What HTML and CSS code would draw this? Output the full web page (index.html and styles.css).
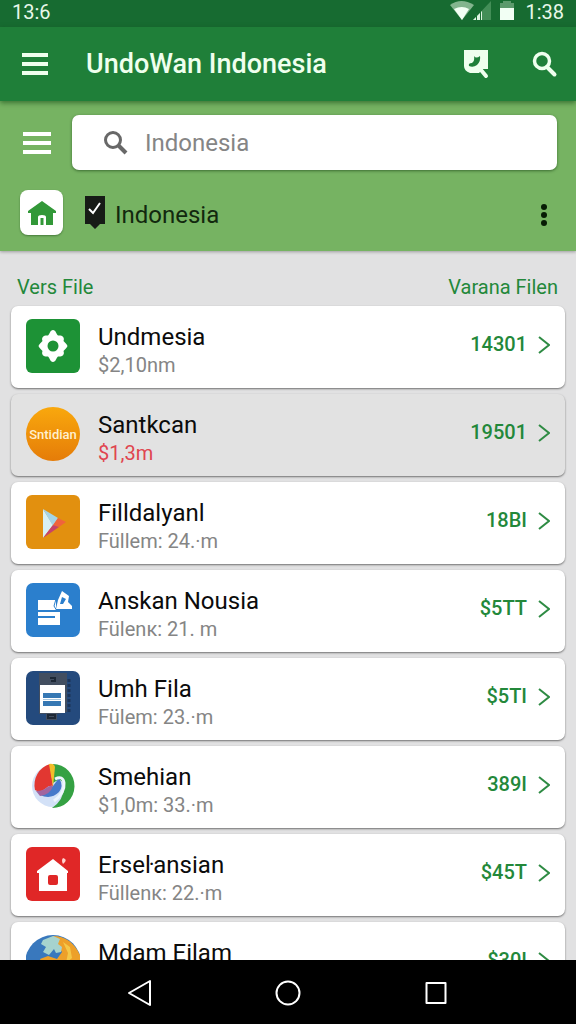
FILE: index.html
```html
<!DOCTYPE html>
<html lang="id">
<head>
<meta charset="utf-8">
<meta name="viewport" content="width=device-width, initial-scale=1">
<title>UndoWan Indonesia</title>
<link rel="stylesheet" href="styles.css">
</head>
<body>
<div class="screen">
  <div class="status">
    <span>13:6</span>
    <div class="status-right">
      <svg class="status-icons" width="66" height="22" viewBox="0 0 66 22" aria-hidden="true">
        <path d="M0 5Q11-3 24 5L12 20Z" fill="#83b58e"/>
        <path d="M4 9Q12 5 19 9L12 20Z" fill="#f2fff4"/>
        <path d="M23 20L41 1V20Z" fill="#438e57"/>
        <path d="M23 20L32 11V20Z" fill="#dff5e3"/>
        <path d="M26.500 14V20M30.500 10V20" stroke="#1a6f33" stroke-width="1"/>
        <path d="M50 3h3V1h8v2h3v6H50Z" fill="#5c9a6c"/>
        <path d="M50 8h14v12H50Z" fill="#f2fff4"/>
      </svg>
      <span>1:38</span>
    </div>
  </div>

  <header class="appbar">
    <button class="icon-btn" type="button" aria-label="Menu">
      <svg width="28" height="24" viewBox="0 0 28 24"><path d="M1 3H27M1 12H27M1 21H27" stroke="#efffee" stroke-width="4"/></svg>
    </button>
    <h1 class="title">UndoWan Indonesia</h1>
    <button class="icon-btn note-btn" type="button" aria-label="Catatan">
      <svg width="26" height="30" viewBox="0 0 26 30">
        <path d="M1 1H25V20H20L16 24H7Q1 22 1 17Z" fill="#efffee"/>
        <path d="M18 21L23 27" stroke="#efffee" stroke-width="4" stroke-linecap="round"/>
        <path d="M11 7Q13 10 17 7Q18 12 14 16Q10 19 6 17Q5 14 9 14Q12 12 11 7Z" fill="#1f7f39"/>
      </svg>
    </button>
    <button class="icon-btn" type="button" aria-label="Cari">
      <svg width="26" height="28" viewBox="0 0 26 28"><circle cx="10" cy="11" r="7.500" fill="none" stroke="#efffee" stroke-width="3.500"/><path d="M15 17L22.500 24.500" stroke="#efffee" stroke-width="4" stroke-linecap="round"/></svg>
    </button>
  </header>

  <section class="panel">
    <div class="search-row">
      <button class="icon-btn" type="button" aria-label="Navigasi">
        <svg width="30" height="26" viewBox="0 0 30 26"><path d="M1 4H29M1 13H29M1 22H29" stroke="#fff" stroke-width="4"/></svg>
      </button>
      <label class="search">
        <svg width="24" height="26" viewBox="0 0 24 26" aria-hidden="true"><circle cx="9" cy="10" r="7.500" fill="none" stroke="#686868" stroke-width="3"/><path d="M14 15L22 23" stroke="#686868" stroke-width="4"/></svg>
        <input class="search-input" type="text" placeholder="Indonesia" aria-label="Cari">
      </label>
    </div>
    <div class="place-row">
      <button class="home" type="button" aria-label="Beranda">
        <svg width="30" height="28" viewBox="0 0 30 28"><path d="M15 2L29 12V14H26V26H19V18Q19 16 15 16Q11 16 11 18V26H4V14H1V12Z" fill="#329838"/><path d="M13.500 19V26H16.500V19Z" fill="#329838"/></svg>
      </button>
      <svg class="tag" width="22" height="36" viewBox="0 0 22 36" aria-hidden="true"><path d="M1 1H21V29L16 29L11 34L6 29H1Z" fill="#171b16"/><path d="M5 14L9 18L16 8" fill="none" stroke="#fff" stroke-width="2"/></svg>
      <span class="place">Indonesia</span>
      <button class="icon-btn more" type="button" aria-label="Opsi lain">
        <svg width="8" height="24" viewBox="0 0 8 24"><g fill="#071c05"><circle cx="4" cy="4" r="3"/><circle cx="4" cy="12" r="3"/><circle cx="4" cy="20" r="3"/></g></svg>
      </button>
    </div>
  </section>

  <main class="content">
    <div class="heads"><h2>Vers File</h2><h2>Varana Filen</h2></div>
    <ul class="list">
      <li><a class="card" href="#">
        <svg class="pic" viewBox="0 0 54 54" aria-hidden="true"><rect width="54" height="54" rx="6" fill="#1d9236"/><path d="M27 11C30 11 30 15 32 16.500C36 16 39 18 37.500 22C39 24 41 25 41.500 27C41 29 39 30 37.500 32C39 36 36 38 32 37.500C30 39 30 43 27 43C24 43 24 39 22 37.500C18 38 15 36 16.500 32C15 30 13 29 12.500 27C13 25 15 24 16.500 22C15 18 18 16 22 16.500C24 15 24 11 27 11Z" fill="#fff"/><circle cx="27" cy="27" r="5.500" fill="#1d9236"/></svg>
        <span class="text"><span class="name">Undmesia</span><span class="sub">$2,10nm</span></span>
        <span class="value">14301</span>
        <svg class="chev" viewBox="0 0 12 20" aria-hidden="true"><path d="M1 2L11 10L1 18"/></svg>
      </a></li>
      <li><a class="card card-active" href="#">
        <span class="pic disc">Sntidian</span>
        <span class="text"><span class="name">Santkcan</span><span class="sub sub-red">$1,3m</span></span>
        <span class="value">19501</span>
        <svg class="chev" viewBox="0 0 12 20" aria-hidden="true"><path d="M1 2L11 10L1 18"/></svg>
      </a></li>
      <li><a class="card" href="#">
        <svg class="pic" viewBox="0 0 54 54" aria-hidden="true"><rect width="54" height="54" rx="6" fill="#e2900f"/><path d="M17 14V43L27 30Z" fill="#d8f0f4"/><path d="M17 14L32 23L27 31Z" fill="#a5d4e6"/><path d="M32 23L40 27L33 32L27 30Z" fill="#f0643c"/><path d="M17 43L27 30L33 32Z" fill="#c6426b"/></svg>
        <span class="text"><span class="name">Filldalyanl</span><span class="sub">Füllem: 24.·m</span></span>
        <span class="value">18BI</span>
        <svg class="chev" viewBox="0 0 12 20" aria-hidden="true"><path d="M1 2L11 10L1 18"/></svg>
      </a></li>
      <li><a class="card" href="#">
        <svg class="pic" viewBox="0 0 54 54" aria-hidden="true"><rect width="54" height="54" rx="7" fill="#2b7fcd"/><path d="M12 17H30V27H12ZM12 29H34V42H12Z" fill="#fff"/><path d="M12 34H29" stroke="#2b7fcd" stroke-width="2"/><path d="M36 8L43 13L42 19L46 23V26H30L32 17Z" fill="#fff"/><path d="M36 14L40 16L37 21H34Z" fill="#2b7fcd"/><path d="M30 16L28 23L31 28" fill="none" stroke="#2b7fcd" stroke-width="1"/></svg>
        <span class="text"><span class="name">Anskan Nousia</span><span class="sub">Fülenк: 21. m</span></span>
        <span class="value">$5TT</span>
        <svg class="chev" viewBox="0 0 12 20" aria-hidden="true"><path d="M1 2L11 10L1 18"/></svg>
      </a></li>
      <li><a class="card" href="#">
        <svg class="pic" viewBox="0 0 54 54" aria-hidden="true"><rect width="54" height="54" rx="7" fill="#244a7d"/><path d="M13 2H41V41L31 43V49H20V43H13Z" fill="#424e60"/><path d="M24 7H29V10H25M22 44H29V47H22Z" fill="none" stroke="#1d2836" stroke-width="2"/><path d="M43 8V41" stroke="#1c3458" stroke-width="3" stroke-dasharray="3 2"/><path d="M14 14H39V42H14Z" fill="#fff"/><path d="M17 22H35V27H17ZM17 30H35V35H17Z" fill="#3678b4"/><path d="M17 28.500H35" stroke="#a9c8df"/></svg>
        <span class="text"><span class="name">Umh Fila</span><span class="sub">Fülem: 23.·m</span></span>
        <span class="value">$5TI</span>
        <svg class="chev" viewBox="0 0 12 20" aria-hidden="true"><path d="M1 2L11 10L1 18"/></svg>
      </a></li>
      <li><a class="card" href="#">
        <svg class="pic" viewBox="0 0 54 54" aria-hidden="true"><circle cx="27" cy="27" r="21" fill="#d3e1f7"/><path d="M27 5A22 22 0 0 1 26 49Q38 41 38 27Q36 17 27 24Z" fill="#35a143"/><path d="M27 27L24 5A22 22 0 0 0 9 31Q14 34 19 30Q23 26 27 27Z" fill="#e23731"/><path d="M23 5Q28 4 29 8L27 28Z" fill="#f2bd29"/><path d="M27 27L33 19Q38 27 33 33Q25 41 14 36Q21 34 27 27Z" fill="#4779ca"/><path d="M10 32Q17 32 20 29Q24 26 27 27Q24 36 14 37Z" fill="#a2659f"/><path d="M29 20Q37 16 38 24Q39 34 28 42" fill="none" stroke="#eef5fd" stroke-width="3"/></svg>
        <span class="text"><span class="name">Smehian</span><span class="sub">$1,0m: 33.·m</span></span>
        <span class="value">389I</span>
        <svg class="chev" viewBox="0 0 12 20" aria-hidden="true"><path d="M1 2L11 10L1 18"/></svg>
      </a></li>
      <li><a class="card" href="#">
        <svg class="pic" viewBox="0 0 54 54" aria-hidden="true"><rect width="54" height="54" rx="6" fill="#e02727"/><path d="M27 12L42 24V26H41V44H13V26H11V24Z" fill="#fff"/><rect x="22" y="28" width="10" height="10" rx="2" fill="#e02727"/><path d="M37 11Q41 12 39 15L37 17Q35 13 37 11Z" fill="#ffd3cf"/></svg>
        <span class="text"><span class="name">Erseŀansian</span><span class="sub">Füllenк: 22.·m</span></span>
        <span class="value">$45T</span>
        <svg class="chev" viewBox="0 0 12 20" aria-hidden="true"><path d="M1 2L11 10L1 18"/></svg>
      </a></li>
      <li><a class="card" href="#">
        <svg class="pic" viewBox="0 0 54 54" aria-hidden="true"><circle cx="27" cy="28" r="28" fill="#3978bd"/><path d="M27 1Q45 1 54 20V54H28L14 24L22 21L31 24L36 17L31 10Z" fill="#eda02a"/><path d="M17 5L27 1L34 4L32 9L36 12L35 17L30 18L28 14L23 20L17 17L20 12L15 9Z" fill="#a6d3ce"/><path d="M37 7L44 12L46 23L40 28L42 18Z" fill="#f5c848"/></svg>
        <span class="text"><span class="name">Mdam Eilam</span><span class="sub">Füllem: 22.m</span></span>
        <span class="value">$30I</span>
        <svg class="chev" viewBox="0 0 12 20" aria-hidden="true"><path d="M1 2L11 10L1 18"/></svg>
      </a></li>
    </ul>
  </main>

  <nav class="navbar" aria-label="Sistem">
    <button class="icon-btn" type="button" aria-label="Kembali"><svg width="28" height="28" viewBox="0 0 28 28"><path d="M24 2V26L3 14Z"/></svg></button>
    <button class="icon-btn" type="button" aria-label="Layar utama"><svg width="28" height="28" viewBox="0 0 28 28"><circle cx="14" cy="14" r="11.500"/></svg></button>
    <button class="icon-btn" type="button" aria-label="Terbaru"><svg width="28" height="28" viewBox="0 0 28 28"><path d="M4.500 4H23.500V24H4.500Z"/></svg></button>
  </nav>
</div>
</body>
</html>
```

FILE: styles.css
```css
* { box-sizing: border-box; }

body {
  margin: 0;
  font-family: Roboto, "Liberation Sans", sans-serif;
}

.screen {
  display: flex;
  flex-direction: column;
  height: 100vh;
  overflow: hidden;
  background: #e1e1e2;
}

.icon-btn {
  display: flex;
  padding: 0;
  border: 0;
  background: none;
}

/* Status bar */
.status {
  display: flex;
  flex: none;
  justify-content: space-between;
  padding: 0 12px 3px;
  background: #176b31;
  color: #e8f8ea;
  font-size: 20px;
  line-height: 24px;
}

.status-right { display: flex; gap: 9px; }

/* App bar */
.appbar {
  position: relative;
  display: flex;
  flex: none;
  align-items: center;
  height: 74px;
  padding: 0 18px 0 21px;
  background: #1f7f39;
  box-shadow: 0 2px 5px rgba(20, 70, 20, 0.6);
}

.title {
  flex: 1;
  margin: 0 0 0 37px;
  color: #efffee;
  font-size: 27px;
  font-weight: 500;
  line-height: 32px;
  white-space: nowrap;
}

.note-btn { margin-right: 43px; }

/* Search panel */
.panel {
  flex: none;
  padding: 14px 19px 16px 20px;
  background: #76b362;
  box-shadow: 0 1px 3px rgba(0, 0, 0, 0.3);
}

.search-row {
  display: flex;
  align-items: center;
  gap: 20px;
  margin-left: 2px;
}

.search {
  display: flex;
  flex: 1;
  align-items: center;
  gap: 17px;
  height: 55px;
  padding: 0 20px 0 32px;
  border-radius: 7px;
  background: #fff;
  box-shadow: 0 1px 3px rgba(0, 40, 0, 0.5);
}

.search-input {
  flex: 1;
  min-width: 0;
  padding: 0;
  border: 0;
  outline: 0;
  background: none;
  color: #555;
  font: 400 24px/32px Roboto, "Liberation Sans", sans-serif;
}

.search-input::placeholder { color: #858585; opacity: 1; }

.place-row {
  display: flex;
  align-items: center;
  margin-top: 20px;
}

.home {
  display: flex;
  align-items: center;
  justify-content: center;
  width: 43px;
  height: 45px;
  padding: 0;
  border: 0;
  border-radius: 8px;
  background: #fff;
  box-shadow: 0 1px 2px rgba(0, 40, 0, 0.4);
}

.tag { margin-left: 21px; }

.place {
  flex: 1;
  margin-left: 9px;
  padding-top: 4px;
  color: #12280e;
  font-size: 24px;
  line-height: 32px;
}

.more { margin: 4px 9px 0 0; }

/* File list */
.content {
  flex: 1;
  min-height: 0;
  padding: 0 11px;
  overflow: hidden;
}

.heads {
  display: flex;
  justify-content: space-between;
  padding: 22px 7px 5px 6px;
}

.heads h2 {
  margin: 0;
  color: #23883a;
  font-size: 20px;
  font-weight: 400;
  line-height: 28px;
}

.list {
  display: flex;
  flex-direction: column;
  gap: 6px;
  margin: 0;
  padding: 0;
  list-style: none;
}

.card {
  display: flex;
  align-items: flex-start;
  padding: 13px 15px 9px;
  border-radius: 7px;
  background: #fff;
  box-shadow: 0 1px 2px rgba(0, 0, 0, 0.5);
  color: #0b0b0b;
  text-decoration: none;
}

.card-active { background: #e2e2e2; }

.pic {
  flex: none;
  width: 54px;
  height: 54px;
}

.disc {
  display: flex;
  align-items: center;
  justify-content: center;
  border-radius: 50%;
  background: linear-gradient(#f9a80d, #e57c08);
  color: #fff0d0;
  font-size: 13px;
  font-weight: 500;
}

.text {
  display: flex;
  flex: 1;
  flex-direction: column;
  margin-left: 18px;
  padding-top: 4px;
}

.name {
  font-size: 24px;
  line-height: 28px;
}

.sub {
  color: #858585;
  font-size: 20px;
  line-height: 28px;
}

.sub-red { color: #e0454f; }

.value {
  color: #23883a;
  font-size: 20px;
  font-weight: 500;
  line-height: 50px;
}

.chev {
  flex: none;
  width: 12px;
  height: 20px;
  margin: 16px 0 0 11px;
  fill: none;
  stroke: #2e8b43;
  stroke-width: 2;
}

/* System navigation */
.navbar {
  position: relative;
  display: flex;
  flex: none;
  align-items: center;
  justify-content: center;
  gap: 120px;
  height: 64px;
  padding-top: 2px;
  background: #000;
}

.navbar svg {
  fill: none;
  stroke: #fff;
  stroke-width: 2;
  stroke-linejoin: round;
}
```
